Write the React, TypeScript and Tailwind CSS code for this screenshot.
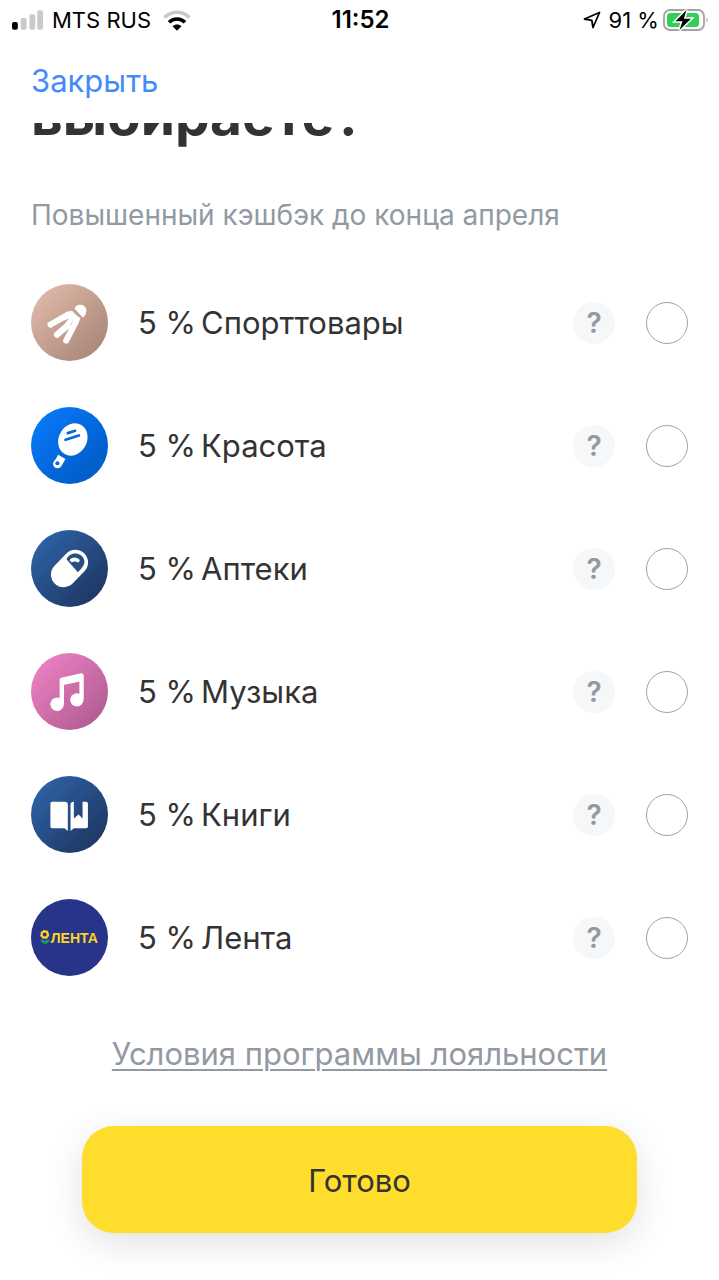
import { useState, type ReactNode } from "react";

type Category = {
  id: string;
  name: string;
  badge: string;
  icon: ReactNode;
};

const categories: Category[] = [
  {
    id: "sport",
    name: "Спорттовары",
    badge: "bg-linear-to-br from-[#e6bfae] to-[#a18073]",
    icon: (
      <g fill="#fff">
        <path d="M163 105C165 97 173 93 182 94C193 95 200 104 198 115C197 123 193 130 187 132Z" />
        <g stroke="#fff" strokeLinecap="round" strokeLinejoin="round">
          <path strokeWidth="18" d="M142 124L91 153" />
          <path strokeWidth="19" d="M141 157L111 183" />
          <path strokeWidth="18" d="M167 145L138 201" />
        </g>
        <path d="M137 116L156 112Q163 122 181 134L174 150L158 142L147 160L134 149L147 135L130 142Z" />
      </g>
    ),
  },
  {
    id: "beauty",
    name: "Красота",
    badge: "bg-linear-to-br from-[#0a7cff] to-[#0057bd]",
    icon: (
      <g>
        <ellipse cx="158" cy="129" rx="42" ry="50" fill="#fff" transform="rotate(29 158 129)" />
        <path d="M143 110L165 103M136 130L176 117" stroke="#0768dc" strokeWidth="8" strokeLinecap="round" />
        <path d="M125 181L113 202" stroke="#fff" strokeWidth="25" />
        <circle cx="112" cy="202" r="13" fill="#fff" />
        <circle cx="112" cy="200" r="6" fill="#0768dc" />
      </g>
    ),
  },
  {
    id: "pharmacy",
    name: "Аптеки",
    badge: "bg-linear-to-br from-[#3068b0] to-[#1b3159]",
    icon: (
      <g>
        <rect x="110" y="84" width="76" height="126" rx="38" fill="#fff" transform="rotate(44 148 147)" />
        <path d="M139 119C142 112 148 106 158 103C174 100 188 108 192 122C194 132 190 141 173 158Z" fill="#265083" />
        <path d="M148 122C154 112 171 112 179 122L174 130C168 126 161 125 155 129Z" fill="#fff" />
      </g>
    ),
  },
  {
    id: "music",
    name: "Музыка",
    badge: "bg-linear-to-br from-[#f385c9] to-[#a9588b]",
    icon: (
      <g>
        <path
          d="M125 184V112L184 99V170M125 122L184 109"
          fill="none"
          stroke="#fff"
          strokeWidth="13"
          strokeLinejoin="round"
        />
        <circle cx="111" cy="185" r="20" fill="#fff" />
        <circle cx="170" cy="172" r="20" fill="#fff" />
      </g>
    ),
  },
  {
    id: "books",
    name: "Книги",
    badge: "bg-linear-to-br from-[#3068b0] to-[#1b3159]",
    icon: (
      <g fill="#fff">
        <path d="M96 109H134Q143 109 143 118V196L133 188H96Q91 188 91 183V114Q91 109 96 109Z" />
        <path d="M151 118Q151 109 161 109V159L175 147L187 159V109H198Q203 109 203 114V183Q203 188 198 188H161L151 196Z" />
      </g>
    ),
  },
  {
    id: "lenta",
    name: "Лента",
    badge: "bg-[#28348a]",
    icon: (
      <g>
        <path
          d="M63 155Q71 153 74 163Q66 165 63 155ZM87 155Q78 153 74 164Q84 166 87 155Z"
          fill="#159a65"
          stroke="#159a65"
          strokeWidth="3"
        />
        <circle cx="74" cy="138" r="9" fill="none" stroke="#ffd51f" strokeWidth="6" />
        <circle cx="74" cy="138" r="12" fill="none" stroke="#ffd51f" strokeWidth="3" strokeDasharray="6 4" />
        <text
          x="92"
          y="163"
          fill="#ffd51f"
          className="font-['Liberation_Sans',sans-serif] text-[42px] font-bold"
        >
          ЛЕНТА
        </text>
      </g>
    ),
  },
];

function StatusBar() {
  return (
    <div className="grid h-10 grid-cols-3 items-center pr-[10px] pl-3 text-[22px] leading-7 text-black">
      <div className="flex items-center gap-2 whitespace-nowrap">
        <svg viewBox="0 0 33 20" className="h-5 w-8 shrink-0" aria-hidden="true">
          <rect x="0" y="12" width="6" height="8" rx="2" fill="#000" />
          <rect x="9" y="8" width="6" height="12" rx="2" fill="#c9c9c9" />
          <rect x="18" y="4" width="6" height="16" rx="2" fill="#c9c9c9" />
          <rect x="26" y="0" width="6" height="20" rx="2" fill="#c9c9c9" />
        </svg>
        <span>MTS RUS</span>
        <svg viewBox="0 0 28 21" className="ml-1 h-[21px] w-7 shrink-0" fill="none" aria-hidden="true">
          <path d="M1.500 7.500C8.500 .5 19.500 .5 26.500 7.500" stroke="#c9c9c9" strokeWidth="3.600" />
          <path d="M6 12.300C10.500 7.800 17.500 7.800 22 12.300" stroke="#000" strokeWidth="3.600" />
          <path d="M9.500 16.200C12 13.800 16 13.800 18.500 16.200L14 20.800Z" fill="#000" />
        </svg>
      </div>
      <time className="text-center text-2xl leading-7 font-semibold">11:52</time>
      <div className="flex items-center justify-end gap-1 whitespace-nowrap">
        <svg viewBox="0 0 18 18" className="mr-1 size-[18px]" fill="none" aria-hidden="true">
          <path d="M1.500 8L16.500 1.500L10 16.500L8.800 9.300Z" stroke="#000" strokeWidth="1.800" strokeLinejoin="round" />
        </svg>
        <span>91 %</span>
        <svg viewBox="0 0 46 24" className="h-6 w-[46px] shrink-0" aria-hidden="true">
          <rect x="1" y="2" width="40" height="20" rx="6" fill="none" stroke="#a3a3a3" strokeWidth="1.800" />
          <path d="M43.500 9.500Q46 12 43.500 14.500Z" fill="#a3a3a3" />
          <rect x="4" y="5" width="32" height="14" rx="3.500" fill="#32cf55" />
          <path
            d="M23.500 2L12.500 13.300H19.500L16.500 22L28 10.800H20.800Z"
            fill="#000"
            stroke="#fff"
            strokeWidth="3"
            paintOrder="stroke"
          />
        </svg>
      </div>
    </div>
  );
}

function CategoryRow({
  category,
  checked,
  onToggle,
}: {
  category: Category;
  checked: boolean;
  onToggle: () => void;
}) {
  return (
    <li className="flex items-center">
      <span className={`size-[77px] shrink-0 overflow-hidden rounded-full ${category.badge}`}>
        <svg viewBox="33 32 230 230" className="size-full" aria-hidden="true">
          {category.icon}
        </svg>
      </span>
      <label htmlFor={category.id} className="ml-[30px] flex flex-1 gap-[5px] text-[31px] leading-10">
        <span>5 %</span>
        <span>{category.name}</span>
      </label>
      <button
        type="button"
        className="size-[42px] rounded-full bg-[#f5f7f9] text-[28px] leading-[42px] font-semibold text-[#9299a2]"
      >
        ?
      </button>
      <input
        id={category.id}
        type="checkbox"
        checked={checked}
        onChange={onToggle}
        className="ml-[31px] size-[42px] shrink-0 appearance-none rounded-full border border-[#a0a2a7] bg-white checked:border-[12px] checked:border-[#ffdd2d]"
      />
    </li>
  );
}

export default function App() {
  const [selected, setSelected] = useState<string[]>([]);

  const toggle = (id: string) =>
    setSelected((current) =>
      current.includes(id) ? current.filter((item) => item !== id) : [...current, id],
    );

  return (
    <div className="min-h-screen bg-white font-['Inter','Liberation_Sans',sans-serif] text-[#333333]">
      <StatusBar />
      <nav className="flex h-[83px] items-center px-[31px] pb-[2px]">
        <button type="button" className="text-[31px] leading-10 text-[#428bf9]">
          Закрыть
        </button>
      </nav>
      <main className="px-[31px]">
        <div className="flex h-7 items-end overflow-hidden pb-6">
          <h1 className="text-[55px] leading-6 font-bold">выбираете?</h1>
        </div>
        <p className="mt-12 text-[28px] leading-8 text-[#9299a2]">Повышенный кэшбэк до конца апреля</p>
        <ul className="mt-[53px] flex flex-col gap-[46px]">
          {categories.map((category) => (
            <CategoryRow
              key={category.id}
              category={category}
              checked={selected.includes(category.id)}
              onToggle={() => toggle(category.id)}
            />
          ))}
        </ul>
        <p className="mt-[58px] text-center text-[31px] leading-10">
          <a href="#terms" className="text-[#9299a2] underline decoration-2 underline-offset-4">
            Условия программы лояльности
          </a>
        </p>
        <div className="mt-[52px] px-[51px] pb-[46px]">
          <button
            type="button"
            className="h-[107px] w-full rounded-[32px] bg-[#ffdd2d] pt-[3px] text-[31px] shadow-[0_10px_36px_rgba(0,0,0,0.12)]"
          >
            Готово
          </button>
        </div>
      </main>
    </div>
  );
}
